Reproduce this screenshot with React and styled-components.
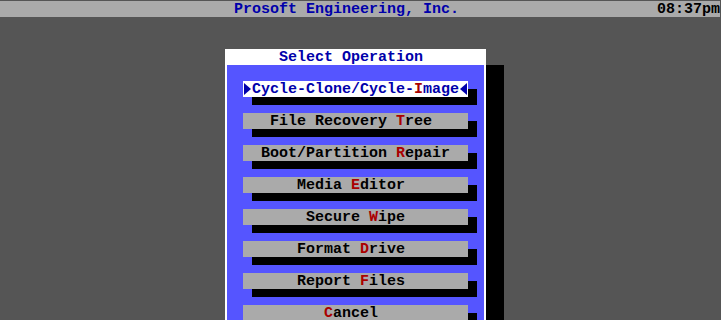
import React from "react";
import styled, { createGlobalStyle } from "styled-components";

const CELL = 9;
const ROW = 16;

const Global = createGlobalStyle`
  html, body { margin: 0; padding: 0; background: #555555; }
  body { overflow: hidden; }
`;

const Screen = styled.div`
  width: 721px;
  height: 320px;
  overflow: hidden;
  background: #555555;
  padding-top: 1px;
  box-sizing: border-box;
  font-family: "Liberation Mono", "DejaVu Sans Mono", monospace;
  font-weight: bold;
  font-size: 15px;
  line-height: ${ROW}px;
  white-space: pre;
`;

const TopBar = styled.div`
  width: 720px;
  height: ${ROW}px;
  background: #aaaaaa;
  display: flex;
  align-items: center;
`;

const Company = styled.span`
  color: #0000aa;
  margin-left: ${26 * CELL}px;
  padding-top: 1px;
`;

const Clock = styled.span`
  color: #000000;
  margin-left: auto;
  padding-top: 1px;
`;

const Dialog = styled.div`
  margin-top: ${2 * ROW}px;
  margin-left: ${25 * CELL}px;
  width: ${29 * CELL}px;
  display: flex;
  flex-direction: column;
`;

const Title = styled.div`
  height: ${ROW}px;
  box-sizing: border-box;
  background: #ffffff;
  color: #0000aa;
  padding-left: ${6 * CELL}px;
  padding-top: 1px;
`;

const Panel = styled.div`
  background: #5555ff;
  border-left: 2px solid #ffffff;
  border-right: 2px solid #ffffff;
  box-shadow: ${2 * CELL}px 0 0 #000000;
  padding: ${ROW}px 0 ${ROW}px ${2 * CELL - 2}px;
  display: flex;
  flex-direction: column;
  gap: ${ROW / 2}px;
  height: 400px;
`;

const Item = styled.div`
  display: grid;
  grid-template-columns: ${25 * CELL}px ${CELL}px;
  grid-template-rows: ${ROW}px ${ROW / 2}px;
`;

const Button = styled.div`
  grid-column: 1;
  grid-row: 1;
  height: ${ROW}px;
  box-sizing: border-box;
  background: ${(p) => (p.$active ? "#ffffff" : "#aaaaaa")};
  color: ${(p) => (p.$active ? "#0000aa" : "#000000")};
  padding-left: ${(p) => p.$pad * CELL}px;
  display: flex;
  align-items: center;
`;

const Label = styled.span`
  padding-top: 2px;
`;

const Hot = styled.span`
  color: #aa0000;
`;

const SideShadow = styled.div`
  grid-column: 2;
  grid-row: 1;
  align-self: end;
  height: ${ROW / 2}px;
  background: #000000;
`;

const UnderShadow = styled.div`
  grid-column: 1 / 3;
  grid-row: 2;
  margin-left: ${CELL}px;
  background: #000000;
`;

const ArrowCell = styled.span`
  display: inline-flex;
  width: ${CELL}px;
  height: ${ROW}px;
  align-items: center;
  justify-content: ${(p) => (p.$dir === "right" ? "flex-start" : "flex-end")};
`;

const Arrow = ({ dir }) => (
  <ArrowCell $dir={dir}>
    <svg width="8" height="14" viewBox="0 0 8 14">
      {dir === "right" ? (
        <polygon points="1,1 8,7 1,13" fill="#0000aa" />
      ) : (
        <polygon points="7,1 0,7 7,13" fill="#0000aa" />
      )}
    </svg>
  </ArrowCell>
);

const items = [
  { text: "Cycle-Clone/Cycle-Image", hot: 18, active: true },
  { text: "File Recovery Tree", hot: 14 },
  { text: "Boot/Partition Repair", hot: 15 },
  { text: "Media Editor", hot: 6 },
  { text: "Secure Wipe", hot: 7 },
  { text: "Format Drive", hot: 7 },
  { text: "Report Files", hot: 7 },
  { text: "Cancel", hot: 0 },
];

function Caption({ text, hot }) {
  return (
    <Label>
      {text.slice(0, hot)}
      <Hot>{text[hot]}</Hot>
      {text.slice(hot + 1)}
    </Label>
  );
}

export default function App() {
  return (
    <>
      <Global />
      <Screen>
        <TopBar>
          <Company>Prosoft Engineering, Inc.</Company>
          <Clock>08:37pm</Clock>
        </TopBar>
        <Dialog>
          <Title>Select Operation</Title>
          <Panel>
            {items.map((it) => {
              const len = it.text.length + (it.active ? 2 : 0);
              const pad = Math.floor((25 - len) / 2);
              return (
                <Item key={it.text}>
                  <Button $active={it.active} $pad={pad}>
                    {it.active && <Arrow dir="right" />}
                    <Caption text={it.text} hot={it.hot} />
                    {it.active && <Arrow dir="left" />}
                  </Button>
                  <SideShadow />
                  <UnderShadow />
                </Item>
              );
            })}
          </Panel>
        </Dialog>
      </Screen>
    </>
  );
}
